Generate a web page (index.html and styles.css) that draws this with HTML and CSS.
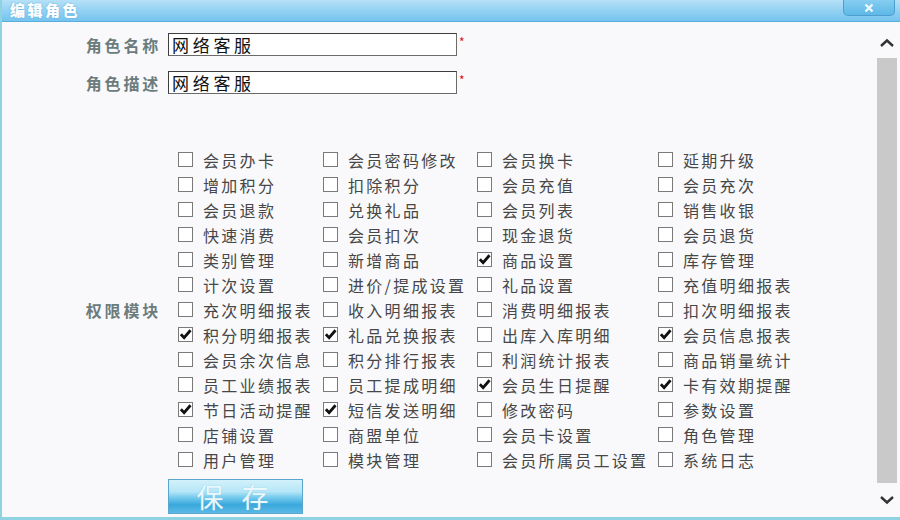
FILE: index.html
```html
<!DOCTYPE html>
<html lang="zh-CN">
<head>
<meta charset="utf-8">
<title>编辑角色</title>
<link rel="stylesheet" href="styles.css">
</head>
<body>
<div class="dialog">
  <div class="titlebar">
    <span class="title">编辑角色</span>
    <span class="close"><svg viewBox="0 0 12 10"><path d="M2.5 1.5 L9.5 8.5 M9.5 1.5 L2.5 8.5"/></svg></span>
  </div>
  <div class="content">
    <div class="main">
      <div class="row">
        <span class="label">角色名称</span>
        <span class="input">网络客服</span>
        <span class="req">*</span>
      </div>
      <div class="row">
        <span class="label">角色描述</span>
        <span class="input">网络客服</span>
        <span class="req">*</span>
      </div>
      <div class="perm">
        <span class="label perm-label">权限模块</span>
        <div class="grid">
          <div class="item"><span class="cb"></span>会员办卡</div>
          <div class="item"><span class="cb"></span>会员密码修改</div>
          <div class="item"><span class="cb"></span>会员换卡</div>
          <div class="item"><span class="cb"></span>延期升级</div>

          <div class="item"><span class="cb"></span>增加积分</div>
          <div class="item"><span class="cb"></span>扣除积分</div>
          <div class="item"><span class="cb"></span>会员充值</div>
          <div class="item"><span class="cb"></span>会员充次</div>

          <div class="item"><span class="cb"></span>会员退款</div>
          <div class="item"><span class="cb"></span>兑换礼品</div>
          <div class="item"><span class="cb"></span>会员列表</div>
          <div class="item"><span class="cb"></span>销售收银</div>

          <div class="item"><span class="cb"></span>快速消费</div>
          <div class="item"><span class="cb"></span>会员扣次</div>
          <div class="item"><span class="cb"></span>现金退货</div>
          <div class="item"><span class="cb"></span>会员退货</div>

          <div class="item"><span class="cb"></span>类别管理</div>
          <div class="item"><span class="cb"></span>新增商品</div>
          <div class="item"><span class="cb on"><svg viewBox="0 0 14 14"><path d="M2 6.8 L5.5 10.4 L12.4 2.4"/></svg></span>商品设置</div>
          <div class="item"><span class="cb"></span>库存管理</div>

          <div class="item"><span class="cb"></span>计次设置</div>
          <div class="item"><span class="cb"></span>进价/提成设置</div>
          <div class="item"><span class="cb"></span>礼品设置</div>
          <div class="item"><span class="cb"></span>充值明细报表</div>

          <div class="item"><span class="cb"></span>充次明细报表</div>
          <div class="item"><span class="cb"></span>收入明细报表</div>
          <div class="item"><span class="cb"></span>消费明细报表</div>
          <div class="item"><span class="cb"></span>扣次明细报表</div>

          <div class="item"><span class="cb on"><svg viewBox="0 0 14 14"><path d="M2 6.8 L5.5 10.4 L12.4 2.4"/></svg></span>积分明细报表</div>
          <div class="item"><span class="cb on"><svg viewBox="0 0 14 14"><path d="M2 6.8 L5.5 10.4 L12.4 2.4"/></svg></span>礼品兑换报表</div>
          <div class="item"><span class="cb"></span>出库入库明细</div>
          <div class="item"><span class="cb on"><svg viewBox="0 0 14 14"><path d="M2 6.8 L5.5 10.4 L12.4 2.4"/></svg></span>会员信息报表</div>

          <div class="item"><span class="cb"></span>会员余次信息</div>
          <div class="item"><span class="cb"></span>积分排行报表</div>
          <div class="item"><span class="cb"></span>利润统计报表</div>
          <div class="item"><span class="cb"></span>商品销量统计</div>

          <div class="item"><span class="cb"></span>员工业绩报表</div>
          <div class="item"><span class="cb"></span>员工提成明细</div>
          <div class="item"><span class="cb on"><svg viewBox="0 0 14 14"><path d="M2 6.8 L5.5 10.4 L12.4 2.4"/></svg></span>会员生日提醒</div>
          <div class="item"><span class="cb on"><svg viewBox="0 0 14 14"><path d="M2 6.8 L5.5 10.4 L12.4 2.4"/></svg></span>卡有效期提醒</div>

          <div class="item"><span class="cb on"><svg viewBox="0 0 14 14"><path d="M2 6.8 L5.5 10.4 L12.4 2.4"/></svg></span>节日活动提醒</div>
          <div class="item"><span class="cb on"><svg viewBox="0 0 14 14"><path d="M2 6.8 L5.5 10.4 L12.4 2.4"/></svg></span>短信发送明细</div>
          <div class="item"><span class="cb"></span>修改密码</div>
          <div class="item"><span class="cb"></span>参数设置</div>

          <div class="item"><span class="cb"></span>店铺设置</div>
          <div class="item"><span class="cb"></span>商盟单位</div>
          <div class="item"><span class="cb"></span>会员卡设置</div>
          <div class="item"><span class="cb"></span>角色管理</div>

          <div class="item"><span class="cb"></span>用户管理</div>
          <div class="item"><span class="cb"></span>模块管理</div>
          <div class="item"><span class="cb"></span>会员所属员工设置</div>
          <div class="item"><span class="cb"></span>系统日志</div>
        </div>
      </div>
      <div class="actions">
        <span class="save">保 存</span>
      </div>
    </div>
    <div class="scrollbar">
      <div class="arrow up"><svg viewBox="0 0 16 10"><path d="M2 8 L8 2.5 L14 8"/></svg></div>
      <div class="track"></div>
      <div class="arrow down"><svg viewBox="0 0 16 10"><path d="M2 2 L8 7.5 L14 2"/></svg></div>
    </div>
  </div>
</div>
</body>
</html>
```

FILE: styles.css
```css
html, body {
  margin: 0;
  padding: 0;
}
body {
  width: 900px;
  height: 520px;
  overflow: hidden;
  background: #f9f9fb;
  font-family: "Noto Sans CJK SC", "Noto Sans", sans-serif;
}
.dialog {
  width: 900px;
  height: 520px;
  box-sizing: border-box;
  border-left: 2px solid #8fd3e2;
  border-bottom: 3px solid #8fd3e2;
  display: flex;
  flex-direction: column;
}
.titlebar {
  height: 22px;
  box-sizing: border-box;
  background: linear-gradient(#b6e1f7, #8ccff2 60%, #76c4ee);
  border-bottom: 1px solid #5aaedc;
  display: flex;
  align-items: flex-start;
  justify-content: space-between;
  padding-left: 8px;
  padding-right: 5px;
}
.title {
  color: #ffffff;
  font-weight: 900;
  font-size: 15px;
  letter-spacing: 2.5px;
  line-height: 20px;
  text-shadow: 0 0 2px #5fa9d6;
}
.close {
  width: 52px;
  height: 16px;
  box-sizing: border-box;
  border: 1px solid #4c9fce;
  border-top: none;
  border-radius: 0 0 5px 5px;
  background: linear-gradient(#86cdf1, #5db8e6);
  display: flex;
  align-items: center;
  justify-content: center;
}
.close svg {
  width: 12px;
  height: 10px;
}
.close svg path {
  fill: none;
  stroke: #eef9ff;
  stroke-width: 2.4;
}
.content {
  flex: 1;
  display: flex;
  min-height: 0;
}
.main {
  flex: 1;
  padding-top: 11px;
}
.row {
  display: flex;
  align-items: center;
  height: 23px;
  margin-bottom: 15px;
}
.label {
  width: 159px;
  margin-right: 7px;
  text-align: right;
  color: #6c7c7c;
  font-weight: bold;
  font-size: 16px;
  letter-spacing: 2.8px;
  flex-shrink: 0;
}
.input {
  width: 289px;
  height: 23px;
  box-sizing: border-box;
  border: 1px solid #6a6a6a;
  border-top-color: #3e3e3e;
  border-left-color: #3e3e3e;
  background: #ffffff;
  color: #111111;
  font-size: 17px;
  letter-spacing: 3.7px;
  line-height: 21px;
  padding-left: 3px;
}
.req {
  align-self: flex-start;
  margin-left: 2px;
  color: #e01010;
  font-size: 12px;
  line-height: 14px;
  margin-top: 2px;
}
.perm {
  display: flex;
  align-items: center;
  margin-top: 53px;
}
.perm-label {
  margin-right: 17px;
}
.grid {
  display: grid;
  grid-template-columns: 145px 154px 181px 200px;
  grid-auto-rows: 25px;
}
.item {
  display: flex;
  align-items: center;
  color: #474747;
  font-size: 16px;
  letter-spacing: 2.3px;
  white-space: nowrap;
}
.cb {
  width: 15px;
  height: 15px;
  box-sizing: border-box;
  border: 1px solid #7a7a7a;
  background: #ffffff;
  margin-right: 10px;
  flex-shrink: 0;
  display: flex;
}
.cb svg {
  width: 13px;
  height: 13px;
}
.cb svg path {
  fill: none;
  stroke: #111111;
  stroke-width: 3;
}
.actions {
  padding-left: 166px;
  margin-top: 7px;
}
.save {
  display: inline-block;
  width: 135px;
  height: 35px;
  box-sizing: border-box;
  border: 1px solid #5aa6cc;
  background: linear-gradient(#d2f1fb, #b6e6f7 35%, #6fc7ec 55%, #3aa8dc 75%, #5bb9e6);
  color: #eaf8fd;
  font-size: 27px;
  line-height: 33px;
  text-align: center;
  letter-spacing: 6px;
  text-shadow: 0 0 1px #7cbcd8;
}
.scrollbar {
  width: 20px;
  margin-right: 3px;
  display: flex;
  flex-direction: column;
}
.arrow {
  display: flex;
  justify-content: center;
}
.arrow svg {
  width: 16px;
  height: 10px;
}
.arrow svg path {
  fill: none;
  stroke: #333333;
  stroke-width: 2.4;
}
.arrow.up {
  height: 36px;
  align-items: center;
  padding-top: 6px;
  box-sizing: border-box;
}
.track {
  flex: 1;
  background: #c9c9c9;
}
.arrow.down {
  height: 34px;
  align-items: center;
}
```
